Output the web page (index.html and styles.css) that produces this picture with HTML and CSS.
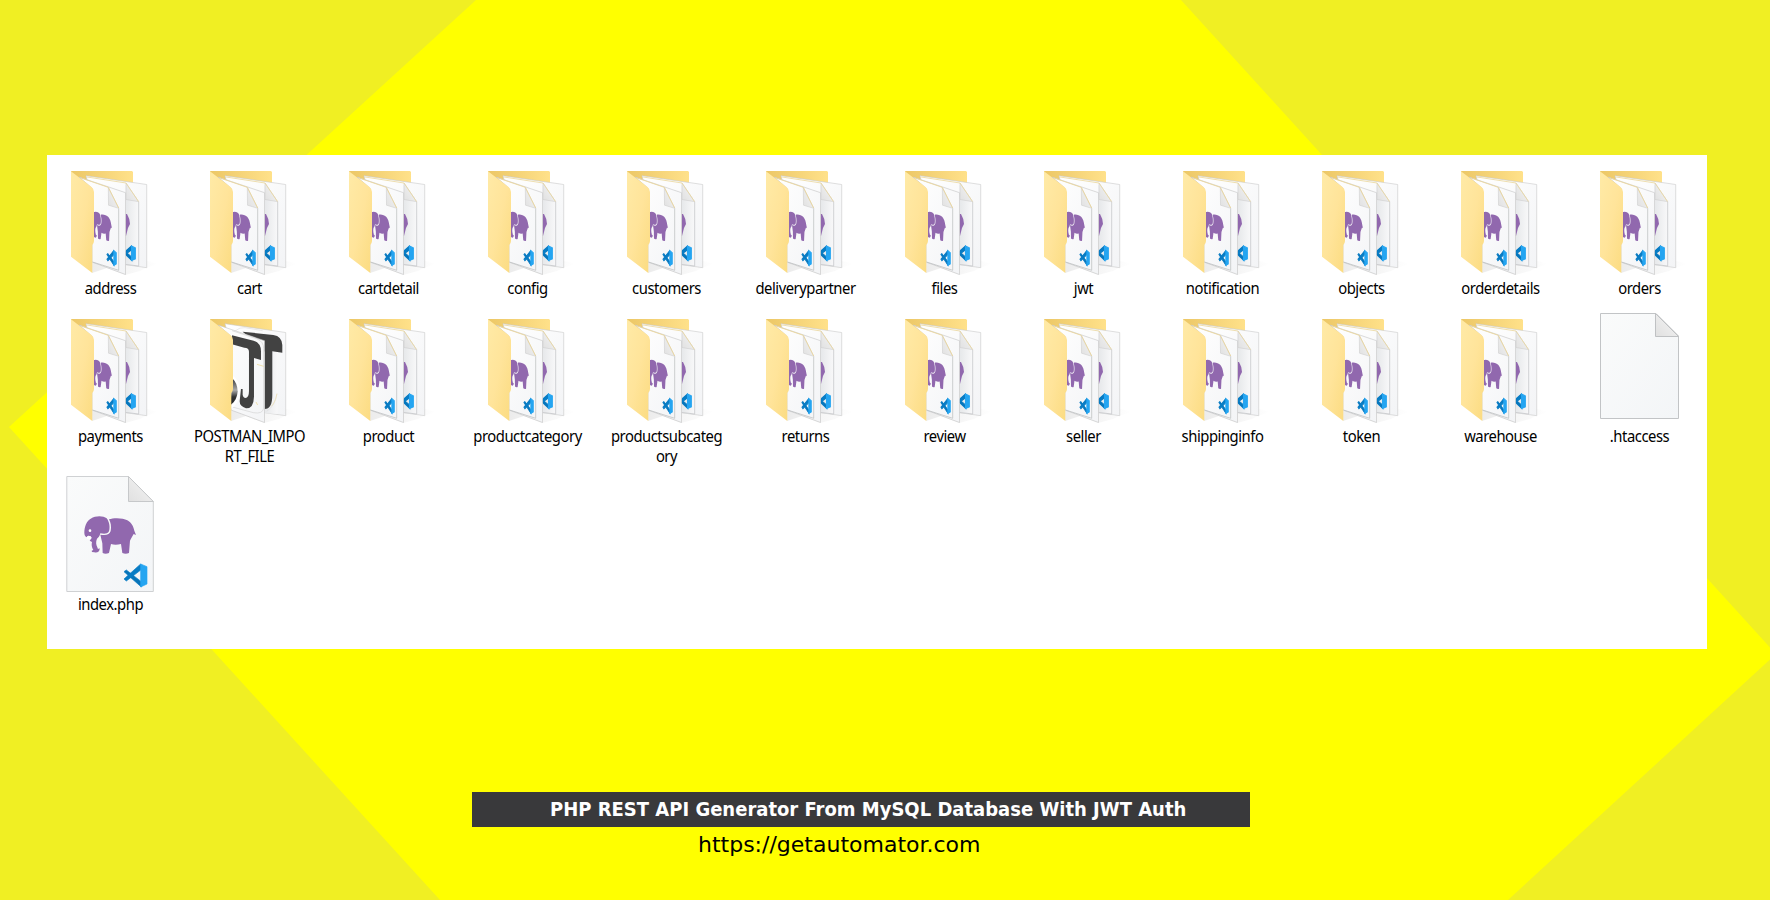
FILE: index.html
```html
<!DOCTYPE html>
<html lang="en">
<head>
<meta charset="utf-8">
<title>PHP REST API Generator</title>
<link rel="stylesheet" href="styles.css">
</head>
<body>
<svg class="defs" width="0" height="0" aria-hidden="true">
  <defs>
    <linearGradient id="flap" x1="0" y1="0" x2="1" y2="1"><stop offset="0" stop-color="#ffeaa6"/><stop offset=".5" stop-color="#ffe49a"/><stop offset="1" stop-color="#fbdb80"/></linearGradient>
    <linearGradient id="back" x1="0" y1="0" x2="1" y2="0"><stop offset="0" stop-color="#ecc766"/><stop offset="1" stop-color="#ffe18a"/></linearGradient>
    <linearGradient id="sheet" x1="0" y1="0" x2="1" y2="1"><stop offset="0" stop-color="#fff"/><stop offset="1" stop-color="#f3f4f6"/></linearGradient>
    <linearGradient id="shade" x1="0" y1="0" x2="1" y2="0"><stop offset="0" stop-color="#e6e8ea"/><stop offset="1" stop-color="#f8f8f9"/></linearGradient>
    <linearGradient id="page" x1="0" y1="0" x2="1" y2="1"><stop offset="0" stop-color="#fafbfb"/><stop offset="1" stop-color="#f3f5f7"/></linearGradient>
    <linearGradient id="fold" x1="0" y1="1" x2="1" y2="0"><stop offset="0" stop-color="#e0e0e0"/><stop offset="1" stop-color="#f6f6f6"/></linearGradient>
    <linearGradient id="shadow" x1="0" y1="0" x2="1" y2="0"><stop offset="0" stop-color="#c8c8c8"/><stop offset="1" stop-color="#fff"/></linearGradient>
    <linearGradient id="ball" x1="0" y1="0" x2="0" y2="1"><stop offset="0" stop-color="#333"/><stop offset=".45" stop-color="#aaa"/><stop offset=".7" stop-color="#333"/><stop offset="1" stop-color="#222"/></linearGradient>
    <clipPath id="frontclip"><path d="M46 25L78 37.7V119L46 106Z"/></clipPath>
    <clipPath id="backclip"><path d="M78.7 27L99.7 29V113L78.7 111Z"/></clipPath>

    <symbol id="elephant" overflow="visible">
      <path fill="#9168ae" d="M103 203C103 185 110 168 122 161C138 151 160 152 170 160C178 170 181 187 177 199C172 208 161 207 151 205C149 214 145 218 141 221C137 230 138 239 142 247L144 252L149 250C150 260 141 265 133 262L126 261L125 257L130 255C125 247 124 239 126 231L119 227L125 219C123 212 113 209 110 217C105 214 103 209 103 203Z"/>
      <path fill="#9168ae" d="M177 163C190 158 219 158 232 166C245 173 250 184 253 197L258 210L251 207C248 213 243 220 240 227L237 264Q227 268 217 264L213 237Q196 241 183 237L177 264Q166 268 158 264L157 235L151 209C169 213 179 208 182 198C185 185 182 172 177 163Z"/>
      <circle cx="120" cy="197" r="4" fill="#fff"/><ellipse cx="117" cy="218" rx="7" ry="5" fill="#fff"/>
    </symbol>
    <symbol id="code" overflow="visible">
      <path fill="#0874b8" d="M222 320L229 315L274 350V366Z"/>
      <path fill="#087cc4" d="M222 342L272 297L275 313L229 348Z"/>
      <path fill="#25a5f1" stroke="#25a5f1" d="M272 297L291 305V357L272 366Z"/>
    </symbol>

    <symbol id="shell" overflow="visible">
      <path fill="url(#shadow)" opacity=".35" d="M45 118L60 113L78 120L93 116L99 113L111 109L101 106H45Z"/>
      <path fill="url(#back)" d="M24 16H85L86 17V60H30Z"/>
      <path fill="url(#sheet)" stroke="#c9c9c9" stroke-width=".6" d="M39 20.7L99.7 29.5V112.7L60 107Z"/>
      <path fill="url(#shade)" d="M78.7 30L91.5 46.7V111L78.7 110Z"/>
    </symbol>
    <symbol id="cover" overflow="visible">
      <path fill="url(#flap)" d="M24 16.3L44.5 32Q47 34 47 37V86Q47 88 45.3 90V118L24 101.7Z"/>
    </symbol>
    <symbol id="folder" overflow="visible">
      <use href="#shell"/>
      <g clip-path="url(#backclip)">
        <path fill="#9168ae" d="M78 59L80 59Q83 64 83 69L81 73L79 81H78Z"/>
        <use href="#code" transform="matrix(.205 .008 0 .21 28.7 26.5)" stroke="#087cc4" stroke-width="5"/>
      </g>
      <path fill="none" stroke="#c5c7c9" stroke-width=".8" d="M91.7 46.7V111L79 109.5"/>
      <path fill="url(#fold)" stroke="#c8c8c8" stroke-width=".5" d="M79 28L91.7 46.7L79 44.5Z"/>
      <path fill="none" stroke="#ead59a" stroke-width=".8" d="M40 22L79 28L91.5 46.5"/>
      <path fill="url(#sheet)" stroke="#c3c3c3" stroke-width=".6" d="M32 22L78.5 37.7V119.5L45 107V33Z"/>
      <path fill="none" stroke="#bfc1c3" stroke-width=".8" d="M71.7 53.3V115.3L45.5 107"/>
      <path fill="url(#fold)" stroke="#c8c8c8" stroke-width=".5" d="M61.3 32.5L71.7 53.3L61.5 50.2Z"/>
      <path fill="none" stroke="#ead59a" stroke-width=".9" d="M34 23L61.3 32.3L71.7 53"/>
      <g clip-path="url(#frontclip)">
        <use href="#elephant" transform="matrix(.14 .028 0 .24 28.87 15.7)"/>
        <use href="#code" transform="matrix(.137 .02 0 .215 29.5 26.3)" stroke="#087cc4" stroke-width="5"/>
      </g>
      <use href="#cover"/>
    </symbol>
    <symbol id="imports" overflow="visible">
      <use href="#shell"/>
      <g transform="matrix(.3333 0 0 .3333 -146 2)">
        <path fill="#424242" d="M608 80L700 90Q726 94 727 120V143L697 139V270Q697 312 674 312V140Z"/>
        <path fill="none" stroke="#dedede" stroke-width="2" d="M585 78Q600 66 615 68L668 77M711 266Q706 302 680 319"/>
        <path fill="none" stroke="#f0dfac" stroke-width="2" d="M711 266Q706 292 694 304"/>
      </g>
      <path fill="url(#sheet)" stroke="#c3c3c3" stroke-width=".6" d="M32 22L78.5 37.7V119.5L45 107V33Z"/>
      <g transform="matrix(.3333 0 0 .3333 -146 2)">
        <path fill="none" stroke="#d3d3d3" stroke-width="2" d="M576 77L650 101Q671 110 671 130V310Q668 328 640 323L577 306"/>
        <path fill="#424242" d="M576 91L641 107Q663 114 663 139V165L642 159V275Q641 311 618 310Q599 304 599 289L603 252H608V270Q610 279 615 279Q627 280 627 258V140Q627 128 613 128L576 118Z"/>
        <path fill="#fff" d="M576 211Q598 224 600 255Q600 292 574 311Z"/>
        <path fill="url(#ball)" d="M576 219Q593 235 593 259Q592 286 572 300Z"/>
        <path fill="none" stroke="#ecd488" stroke-width="2" d="M651 178L671 184M648 291L653 300"/>
      </g>
      <use href="#cover"/>
    </symbol>
    <symbol id="blank" overflow="visible">
      <path fill="url(#page)" stroke="#c2c4c6" d="M24.5 10.5H80L102.5 33V115.5H24.5Z"/>
      <path fill="url(#fold)" stroke="#bfc1c3" d="M79.5 10.5L102.5 33.5H79.5Z"/>
    </symbol>
    <symbol id="script" overflow="visible">
      <path fill="url(#page)" stroke="#cfd1d3" d="M19.8 5.5H81.5L106.3 30.5V120.5H19.8Z"/>
      <path fill="url(#fold)" stroke="#c6c8ca" d="M81.5 5.5L106.3 30.5H81.5Z"/>
      <use href="#elephant" transform="matrix(.3333 0 0 .3333 3 -6)"/>
      <use href="#code" transform="matrix(.3333 0 0 .3333 3 -6)" stroke="#087cc4" stroke-width="2"/>
    </symbol>
  </defs>
</svg>

<svg class="backdrop" viewBox="0 0 1770 900" aria-hidden="true"><path d="M476 0H1181L1776 654L1508 900H440L9 427Z"/></svg>

<main class="poster">
  <section class="files">
    <figure class="item"><svg class="icon"><use href="#folder"/></svg><figcaption>address</figcaption></figure>
    <figure class="item"><svg class="icon"><use href="#folder"/></svg><figcaption>cart</figcaption></figure>
    <figure class="item"><svg class="icon"><use href="#folder"/></svg><figcaption>cartdetail</figcaption></figure>
    <figure class="item"><svg class="icon"><use href="#folder"/></svg><figcaption>config</figcaption></figure>
    <figure class="item"><svg class="icon"><use href="#folder"/></svg><figcaption>customers</figcaption></figure>
    <figure class="item"><svg class="icon"><use href="#folder"/></svg><figcaption>deliverypartner</figcaption></figure>
    <figure class="item"><svg class="icon"><use href="#folder"/></svg><figcaption>files</figcaption></figure>
    <figure class="item"><svg class="icon"><use href="#folder"/></svg><figcaption>jwt</figcaption></figure>
    <figure class="item"><svg class="icon"><use href="#folder"/></svg><figcaption>notification</figcaption></figure>
    <figure class="item"><svg class="icon"><use href="#folder"/></svg><figcaption>objects</figcaption></figure>
    <figure class="item"><svg class="icon"><use href="#folder"/></svg><figcaption>orderdetails</figcaption></figure>
    <figure class="item"><svg class="icon"><use href="#folder"/></svg><figcaption>orders</figcaption></figure>
    <figure class="item"><svg class="icon"><use href="#folder"/></svg><figcaption>payments</figcaption></figure>
    <figure class="item"><svg class="icon"><use href="#imports"/></svg><figcaption>POSTMAN_IMPO<br>RT_FILE</figcaption></figure>
    <figure class="item"><svg class="icon"><use href="#folder"/></svg><figcaption>product</figcaption></figure>
    <figure class="item"><svg class="icon"><use href="#folder"/></svg><figcaption>productcategory</figcaption></figure>
    <figure class="item"><svg class="icon"><use href="#folder"/></svg><figcaption>productsubcateg<br>ory</figcaption></figure>
    <figure class="item"><svg class="icon"><use href="#folder"/></svg><figcaption>returns</figcaption></figure>
    <figure class="item"><svg class="icon"><use href="#folder"/></svg><figcaption>review</figcaption></figure>
    <figure class="item"><svg class="icon"><use href="#folder"/></svg><figcaption>seller</figcaption></figure>
    <figure class="item"><svg class="icon"><use href="#folder"/></svg><figcaption>shippinginfo</figcaption></figure>
    <figure class="item"><svg class="icon"><use href="#folder"/></svg><figcaption>token</figcaption></figure>
    <figure class="item"><svg class="icon"><use href="#folder"/></svg><figcaption>warehouse</figcaption></figure>
    <figure class="item"><svg class="icon"><use href="#blank"/></svg><figcaption>.htaccess</figcaption></figure>
    <figure class="item"><svg class="icon"><use href="#script"/></svg><figcaption>index.php</figcaption></figure>
  </section>
  <footer class="caption">
    <h1 class="title">PHP REST API Generator From MySQL Database With JWT Auth</h1>
    <p class="link">https://getautomator.com</p>
  </footer>
</main>
</body>
</html>
```
FILE: styles.css
```css
* { box-sizing: border-box; }
body { margin: 0; width: 1770px; height: 900px; overflow: hidden; background: #f0ef23; }
.defs { position: absolute; }
.backdrop { position: absolute; inset: 0; width: 1770px; height: 900px; z-index: -1; fill: #ffff00; }
.poster { height: 900px; padding: 155px 63px 0 47px; }
.files {
  display: grid;
  grid-template-columns: repeat(12, 127px);
  grid-template-rows: 148px 168px 178px;
  column-gap: 12px;
  width: 1660px;
  height: 494px;
  background: #fff;
}
.item { margin: 0; }
.icon { display: block; width: 127px; height: 123px; overflow: visible; }
.item figcaption {
  font: 16px/20px "Noto Sans", sans-serif;
  letter-spacing: -0.5px;
  transform: scaleX(0.925);
  text-align: center;
  white-space: nowrap;
  color: #000;
}
.caption { width: 778px; margin: 143px 0 0 425px; }
.title {
  margin: 0;
  height: 35px;
  padding-left: 78px;
  background: #39393b;
  color: #fff;
  font: bold 20px/35px "DejaVu Sans Condensed", "DejaVu Sans", sans-serif;
  white-space: nowrap;
}
.link {
  margin: 0;
  padding-left: 226px;
  color: #000;
  font: 22px/36px "DejaVu Sans", sans-serif;
}
```
